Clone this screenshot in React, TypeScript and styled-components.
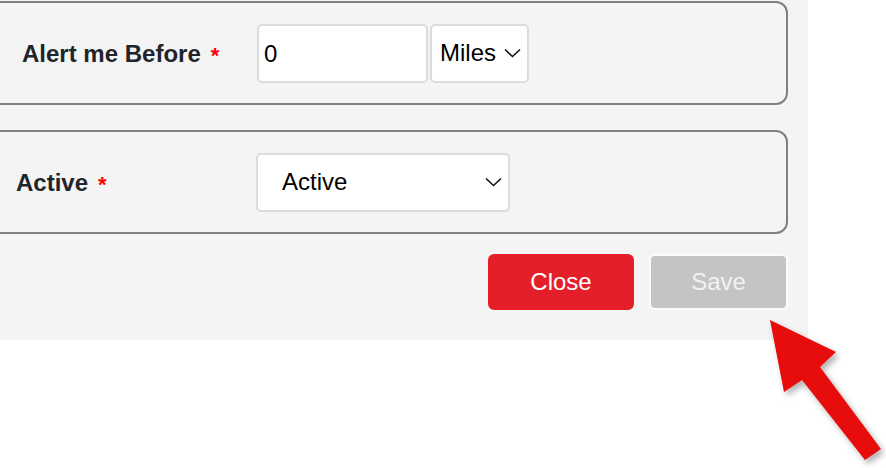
import React from "react";
import styled, { createGlobalStyle } from "styled-components";

const Global = createGlobalStyle`
  html, body { margin: 0; padding: 0; background: #ffffff; }
  body { font-family: "Liberation Sans", Arial, sans-serif; overflow: hidden; }
`;

const Page = styled.div`
  position: relative;
  width: 886px;
  height: 468px;
  overflow: hidden;
`;

const Panel = styled.div`
  margin-left: -30px;
  width: 818px;
  height: 339px;
  padding: 1px 20px 0 0;
  background: #f4f4f4;
  display: flex;
  flex-direction: column;
  gap: 25px;
`;

const Box = styled.div<{ $indent: number; $labelWidth: number }>`
  box-sizing: border-box;
  height: 104px;
  border: 2px solid #808080;
  border-radius: 12px;
  padding-left: ${(p) => p.$indent}px;
  display: grid;
  grid-template-columns: ${(p) => p.$labelWidth}px auto;
  align-items: center;
  justify-content: start;
`;

const Label = styled.div`
  font-size: 24px;
  font-weight: 700;
  color: #212529;
  white-space: nowrap;
  padding-top: 2px;
`;

const Required = styled.span`
  color: #ff0000;
  font-size: 22px;
  margin-left: 10px;
  position: relative;
  top: 1px;
`;

const Controls = styled.div`
  display: flex;
  align-items: center;
  gap: 2px;
`;

const TextInput = styled.div`
  box-sizing: border-box;
  width: 171px;
  height: 59px;
  margin-top: 1px;
  background: #fff;
  border: 2px solid #dcdcdc;
  border-radius: 5px;
  padding-left: 5px;
  display: flex;
  align-items: center;
  font-size: 24px;
  color: #000;
`;

const Select = styled.div<{ $width: number; $padLeft: number }>`
  box-sizing: border-box;
  width: ${(p) => p.$width}px;
  height: 59px;
  background: #fff;
  border: 2px solid #dcdcdc;
  border-radius: 5px;
  padding: 0 6px 0 ${(p) => p.$padLeft}px;
  display: flex;
  align-items: center;
  justify-content: space-between;
  font-size: 24px;
  color: #000;
`;

const Chevron = styled.svg`
  width: 17px;
  height: 10px;
  flex: none;
`;

const Buttons = styled.div`
  display: flex;
  justify-content: flex-end;
  align-items: center;
  gap: 15px;
  margin-top: -5px;
`;

const Button = styled.div<{ $variant: "close" | "save" }>`
  box-sizing: border-box;
  height: 56px;
  width: ${(p) => (p.$variant === "close" ? 146 : 139)}px;
  border-radius: 6px;
  display: flex;
  align-items: center;
  justify-content: center;
  font-size: 24px;
  background: ${(p) => (p.$variant === "close" ? "#e51f2a" : "#c4c4c4")};
  color: ${(p) => (p.$variant === "close" ? "#ffffff" : "#f2f2f2")};
  border: 2px solid ${(p) => (p.$variant === "close" ? "#e51f2a" : "#fbfbfb")};
`;

const ArrowLayer = styled.svg`
  position: absolute;
  left: 0;
  top: 0;
  width: 886px;
  height: 468px;
  pointer-events: none;
  overflow: visible;
`;

const ChevronIcon = () => (
  <Chevron viewBox="0 0 17 10">
    <polyline points="1,1.5 8.5,8.5 16,1.5" fill="none" stroke="#111" strokeWidth="1.6" />
  </Chevron>
);

export default function App() {
  return (
    <Page>
      <Global />
      <Panel>
        <Box $indent={50} $labelWidth={235}>
          <Label>
            Alert me Before<Required>*</Required>
          </Label>
          <Controls>
            <TextInput>0</TextInput>
            <Select $width={99} $padLeft={8}>
              Miles
              <ChevronIcon />
            </Select>
          </Controls>
        </Box>
        <Box $indent={44} $labelWidth={240}>
          <Label>
            Active<Required>*</Required>
          </Label>
          <Select $width={254} $padLeft={24}>
            Active
            <ChevronIcon />
          </Select>
        </Box>
        <Buttons>
          <Button $variant="close">Close</Button>
          <Button $variant="save">Save</Button>
        </Buttons>
      </Panel>
      <ArrowLayer viewBox="0 0 886 468">
        <defs>
          <filter id="shadow" x="-20%" y="-20%" width="140%" height="140%">
            <feDropShadow dx="3" dy="4" stdDeviation="3" floodColor="#000" floodOpacity="0.3" />
          </filter>
        </defs>
        <polygon
          points="770,320 836,352 820,367 881,449 865,460 802,380 784,392"
          fill="#e80909"
          filter="url(#shadow)"
        />
      </ArrowLayer>
    </Page>
  );
}
